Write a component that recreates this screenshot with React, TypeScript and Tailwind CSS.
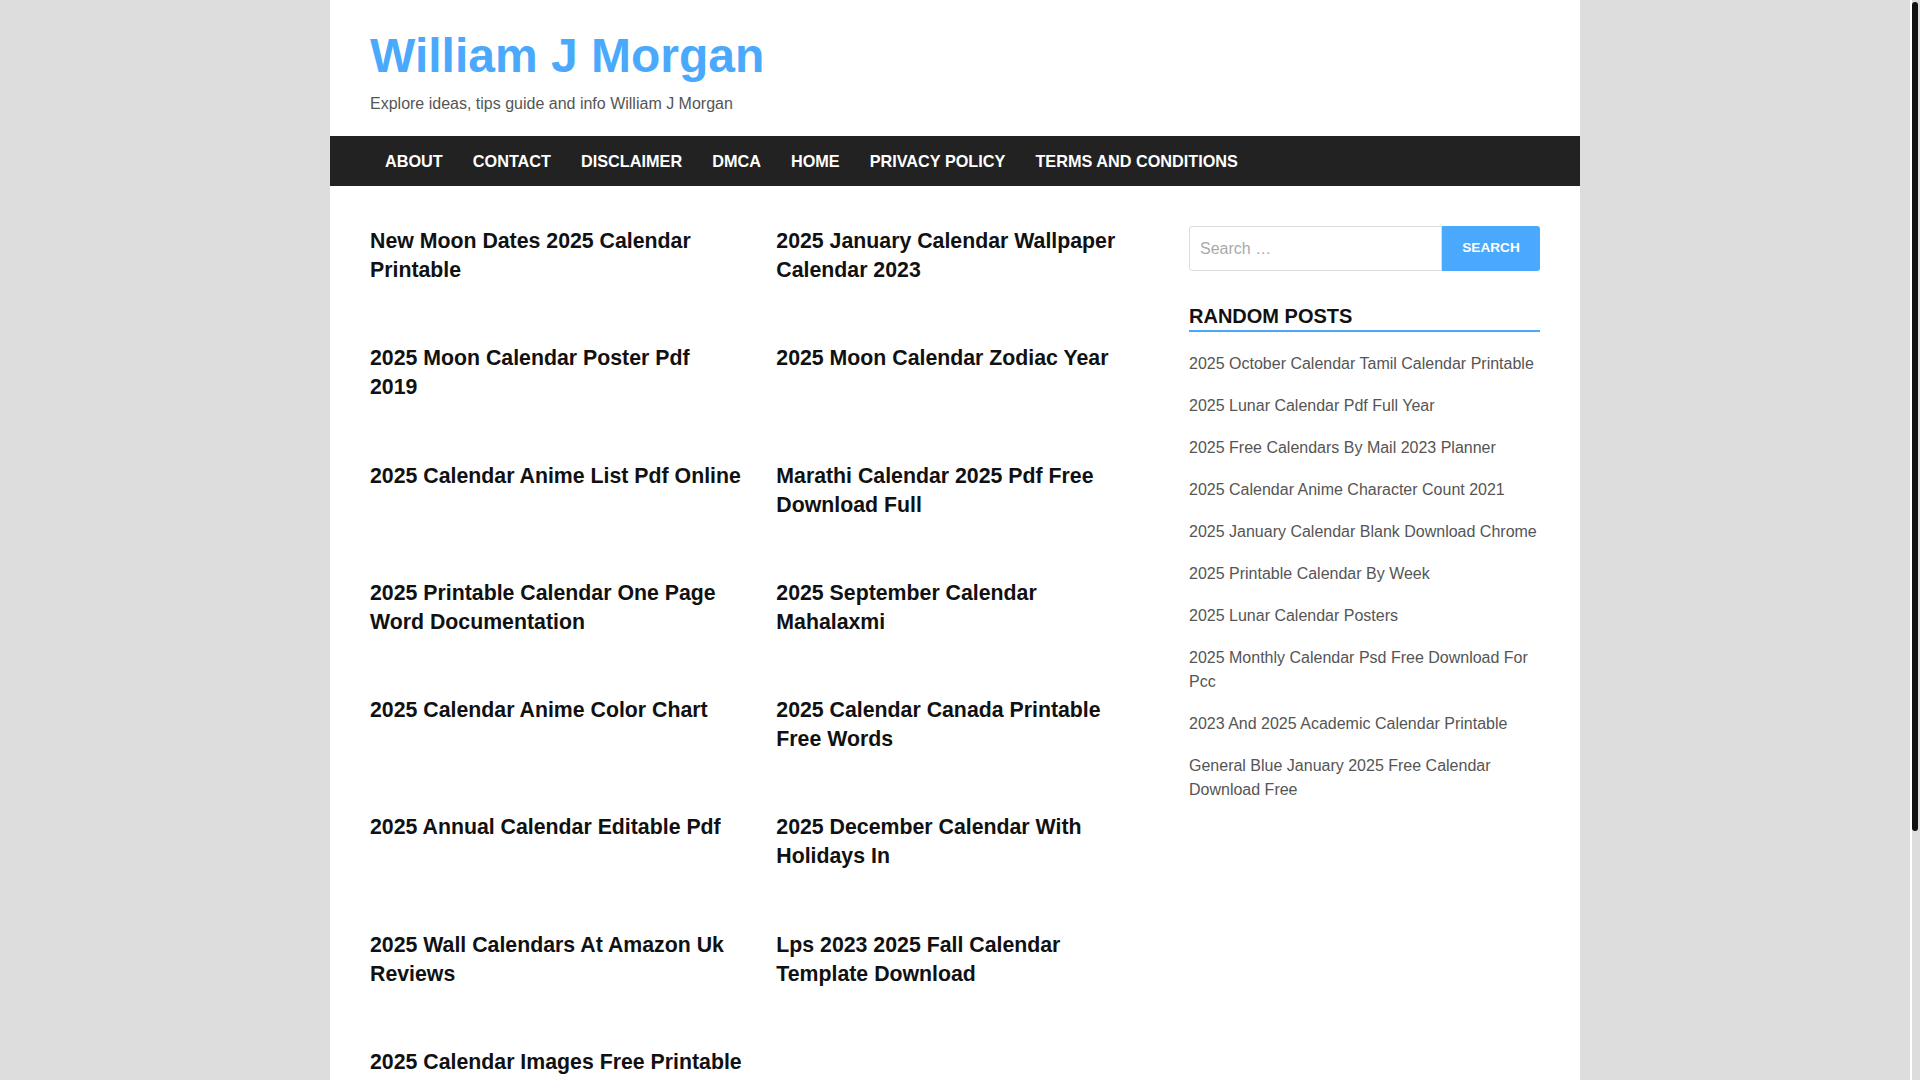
import React from 'react'

const navItems = ['About', 'Contact', 'Disclaimer', 'DMCA', 'Home', 'Privacy Policy', 'Terms and Conditions']

const posts = [
  'New Moon Dates 2025 Calendar Printable',
  '2025 January Calendar Wallpaper Calendar 2023',
  '2025 Moon Calendar Poster Pdf 2019',
  '2025 Moon Calendar Zodiac Year',
  '2025 Calendar Anime List Pdf Online',
  'Marathi Calendar 2025 Pdf Free Download Full',
  '2025 Printable Calendar One Page Word Documentation',
  '2025 September Calendar Mahalaxmi',
  '2025 Calendar Anime Color Chart',
  '2025 Calendar Canada Printable Free Words',
  '2025 Annual Calendar Editable Pdf',
  '2025 December Calendar With Holidays In',
  '2025 Wall Calendars At Amazon Uk Reviews',
  'Lps 2023 2025 Fall Calendar Template Download',
  '2025 Calendar Images Free Printable',
]

const randomPosts = [
  '2025 October Calendar Tamil Calendar Printable',
  '2025 Lunar Calendar Pdf Full Year',
  '2025 Free Calendars By Mail 2023 Planner',
  '2025 Calendar Anime Character Count 2021',
  '2025 January Calendar Blank Download Chrome',
  '2025 Printable Calendar By Week',
  '2025 Lunar Calendar Posters',
  '2025 Monthly Calendar Psd Free Download For Pcc',
  '2023 And 2025 Academic Calendar Printable',
  'General Blue January 2025 Free Calendar Download Free',
]

export default function App() {
  return (
    <div className="flex h-screen overflow-hidden bg-[#dddddd] font-['Liberation_Sans',Arial,sans-serif]">
      <div className="flex min-w-0 flex-1 flex-col">
        <div className="mx-auto w-[1250px] flex-1 bg-white">
          {/* Header */}
          <header className="px-[40px] pt-[32px] pb-[20px]">
            <h1 className="text-[48px] leading-[48px] font-bold text-[#4ba9fd]">
              <a href="#">William J Morgan</a>
            </h1>
            <p className="mt-[12px] text-[16px] leading-[24px] text-[#555555]">
              Explore ideas, tips guide and info William J Morgan
            </p>
          </header>

          {/* Navigation */}
          <nav className="h-[50px] bg-[#222222] px-[40px]">
            <ul className="flex h-full items-center">
              {navItems.map(item => (
                <li key={item}>
                  <a href="#" className="block px-[15px] text-[16.25px] leading-[50px] font-bold uppercase text-white">
                    {item}
                  </a>
                </li>
              ))}
            </ul>
          </nav>

          {/* Content */}
          <div className="flex px-[40px] pt-[41px]">
            <main className="w-[819px]">
              <div className="grid grid-cols-[372.3px_372.3px] gap-x-[34px] gap-y-[59.3px]">
                {posts.map(title => (
                  <article key={title}>
                    <h2 className="text-[21.3px] leading-[29px] font-bold text-[#111111]">
                      <a href="#">{title}</a>
                    </h2>
                  </article>
                ))}
              </div>
            </main>

            <aside className="-mt-[1px] w-[351px]">
              <form className="flex h-[45px]" onSubmit={e => e.preventDefault()}>
                <input
                  type="search"
                  placeholder="Search …"
                  className="h-full min-w-0 flex-1 rounded-l-[3px] border border-[#dddddd] px-[10px] text-[16px] text-[#555555] outline-none placeholder:text-[#aaaaaa]"
                />
                <button
                  type="submit"
                  className="h-full w-[98px] rounded-r-[3px] bg-[#4ba9fd] text-[13.6px] font-bold uppercase text-white"
                >
                  Search
                </button>
              </form>

              <section className="mt-[31px]">
                <h3 className="border-b-2 border-[#4ba9fd] text-[20px] leading-[28px] font-bold uppercase text-[#111111]">
                  Random Posts
                </h3>
                <ul className="mt-[20px] flex flex-col gap-[18px]">
                  {randomPosts.map(p => (
                    <li key={p} className="text-[16px] leading-[24px] text-[#555555]">
                      <a href="#">{p}</a>
                    </li>
                  ))}
                </ul>
              </section>
            </aside>
          </div>
        </div>
      </div>

      {/* scrollbar */}
      <div className="flex w-[10px] border-l-2 border-white bg-[#dddddd] pt-[2px]">
        <div className="h-[829px] w-[6px] rounded-full bg-[#111111]" />
      </div>
    </div>
  )
}
